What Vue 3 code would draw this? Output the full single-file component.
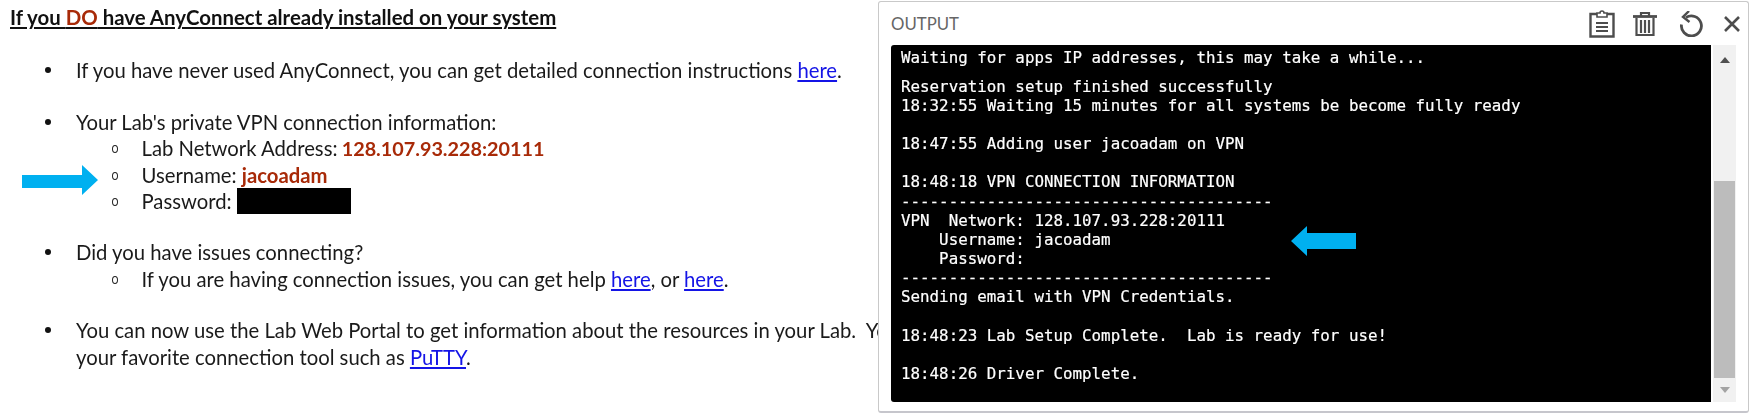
<script setup>
const blocks = [
  ['Waiting for apps IP addresses, this may take a while...'],
  [
    'Reservation setup finished successfully',
    '18:32:55 Waiting 15 minutes for all systems be become fully ready',
    '',
    '18:47:55 Adding user jacoadam on VPN',
    '',
    '18:48:18 VPN CONNECTION INFORMATION',
    '---------------------------------------',
    'VPN  Network: 128.107.93.228:20111',
    '    Username: jacoadam',
    '    Password:',
    '---------------------------------------',
    'Sending email with VPN Credentials.',
    '',
    '18:48:23 Lab Setup Complete.  Lab is ready for use!',
    '',
    '18:48:26 Driver Complete.'
  ]
]
</script>

<template>
  <div class="page">
    <section class="doc">
      <h1 class="title">If you <span class="red">DO</span> have AnyConnect already installed on your system</h1>
      <ul class="top">
        <li>If you have never used AnyConnect, you can get detailed connection instructions <a href="#">here</a>.</li>
        <li>
          Your Lab's private VPN connection information:
          <ul class="sub">
            <li>Lab Network Address: <b class="red addr">128.107.93.228:20111</b></li>
            <li>Username: <b class="red">jacoadam</b></li>
            <li class="pw">Password: <span class="redact"></span></li>
          </ul>
        </li>
        <li>
          Did you have issues connecting?
          <ul class="sub">
            <li>If you are having connection issues, you can get help <a href="#">here</a>, or <a href="#">here</a>.</li>
          </ul>
        </li>
        <li>You can now use the Lab Web Portal to get information about the resources in your Lab.&nbsp; You<br>your favorite connection tool such as <a href="#">PuTTY</a>.</li>
      </ul>
    </section>

    <svg class="arrow arrow-doc" viewBox="0 0 76 30" width="76" height="30"><path d="M0 10H60V0L76 15 60 30V23H0Z" fill="#00b0f0"/></svg>

    <aside class="panel">
      <header class="head">
        <span class="label">OUTPUT</span>
        <div class="tools">
          <svg class="clip" width="26" height="28" viewBox="0 0 26 28" fill="none" stroke="#4d4d4d" stroke-width="2.400"><path d="M8 4H1.500v22.500h23V4H18"/><path d="M8 7V3h3a2 2 0 0 1 4 0h3v4z" fill="#fff" stroke-width="1.600"/><path d="M7 13h12M7 17h12M7 21h12" stroke-width="1.800"/></svg>
          <svg width="24" height="24" viewBox="0 0 24 24" fill="none" stroke="#4d4d4d" stroke-width="2.200"><path d="M0 4.500h24" stroke-width="2.800"/><path d="M8 4V1h8v3"/><path d="M3.500 6v17h17V6"/><path d="M8 8v13M12 8v13M16 8v13" stroke-width="2.200"/></svg>
          <svg width="24" height="26" viewBox="0 0 24 26" fill="none" stroke="#4d4d4d" stroke-width="2.800"><path d="M7 6.500a10 10 0 1 1-4.500 7"/><path d="M10 0 4 6l6.500 5" stroke-width="2.400"/></svg>
          <svg width="16" height="16" viewBox="0 0 16 16" fill="none" stroke="#4d4d4d" stroke-width="2.600"><path d="M1 1l14 14M15 1 1 15"/></svg>
        </div>
      </header>
      <div class="body">
        <div class="term">
          <pre v-for="(b, i) in blocks" :key="i" class="block">{{ b.join('\n') }}</pre>
        </div>
        <div class="scroll">
          <span class="up"></span>
          <span class="track"><span class="thumb"></span></span>
          <span class="down"></span>
        </div>
      </div>
      <svg class="arrow arrow-term" viewBox="0 0 65 30" width="65" height="30"><path d="M65 7H16V0L0 15l16 15v-7h49Z" fill="#00b0f0"/></svg>
    </aside>
  </div>
</template>

<style>
html, body { margin: 0; background: #fff; overflow: hidden; }
</style>

<style scoped>
.page { position: relative; width: 1755px; height: 419px; overflow: hidden; background: #fff; }
.doc { padding: 4px 0 0 10px; font-family: Lato, "Liberation Sans", sans-serif; font-size: 20.280px; line-height: 26.400px; color: #1a1a1a; white-space: nowrap; filter: blur(0.4px); }
.title { margin: 0; font-size: 20.400px; font-weight: 700; line-height: 26.400px; text-decoration: underline; color: #111; }
.red { color: #a82a08; }
ul { list-style: none; margin: 0; padding: 0; }
.top { margin-top: 27px; display: flex; flex-direction: column; gap: 25px; padding-left: 66px; }
.top > li { position: relative; }
.top > li::before { content: ""; position: absolute; left: -31px; top: 10px; width: 6px; height: 6px; border-radius: 50%; background: #111; }
.sub { padding-left: 65.500px; }
.sub li { position: relative; }
.sub li::before { content: ""; position: absolute; left: -30px; top: 10px; width: 4px; height: 6px; border: 1.200px solid #222; border-radius: 50%; }
.sub b { font-weight: 700; }
.addr { font-size: 19.800px; margin-left: -1px; }
.redact { display: inline-block; width: 114px; height: 26px; background: #000; vertical-align: top; margin-left: 0; }
a { color: #1414e6; text-decoration: underline; }
.arrow { position: absolute; }
.arrow-doc { left: 22px; top: 165px; }
.arrow-term { left: 412px; top: 224px; filter: blur(0.3px); }
.panel { position: absolute; left: 878px; top: 1px; width: 871px; height: 412px; box-sizing: border-box; background: #fff; border: 1px solid #c9c9c9; border-bottom: 2px solid #c6c6cc; border-radius: 3px; padding: 0 12px 9px 12px; display: flex; flex-direction: column; }
.head { height: 43px; display: flex; align-items: center; flex: none; }
.label { font-family: Lato, "Liberation Sans", sans-serif; font-size: 16.800px; color: #666; }
.tools { margin-left: auto; margin-right: -4px; display: flex; align-items: center; gap: 21.300px; filter: blur(0.4px); }
.clip { margin-right: -3px; }
.body { flex: 1; display: flex; gap: 2px; min-height: 0; }
.term { flex: 1; background: #000; border-radius: 3px 0 0 3px; padding: 2.500px 10px; color: #fff; overflow: hidden; }
.block { margin: 0 0 10px; font-family: "DejaVu Sans Mono", "Liberation Mono", monospace; font-size: 15.830px; line-height: 19.150px; -webkit-text-stroke: 0.2px #fff; filter: blur(0.35px); }
.scroll { width: 23px; flex: none; background: #f1f1f1; display: flex; flex-direction: column; align-items: center; }
.up, .down { flex: none; width: 0; height: 0; border-left: 5.500px solid transparent; border-right: 5.500px solid transparent; }
.up { border-bottom: 6px solid #505050; margin: 12px 0 7px; }
.down { border-top: 6px solid #a3a3a3; margin: 9px 0 9px; }
.track { flex: 1; width: 21px; display: flex; flex-direction: column; justify-content: flex-end; }
.thumb { height: 197px; background: #bcbcbc; }
</style>
